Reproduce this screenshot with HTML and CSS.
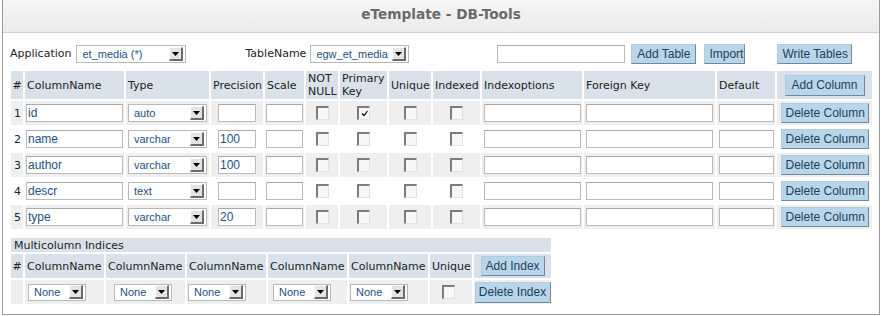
FILE: index.html
```html
<!DOCTYPE html>
<html lang="en">
<head>
<meta charset="UTF-8" />
<meta name="viewport" content="width=device-width, initial-scale=1" />
<title>eTemplate - DB-Tools</title>
<link rel="stylesheet" href="styles.css">
</head>
<body>

<div class="frame">
  <div class="titlebar">eTemplate - DB-Tools</div>

  <div class="content">
    <!-- top toolbar -->
    <div class="toolbar">
      <span class="lbl">Application</span>
      <span class="sel sel-app"><span class="val">et_media (*)</span><span class="arr"><svg width="9" height="9" viewBox="0 0 9 9"><path d="M1 3h7L4.5 7z"/></svg></span></span>
      <span class="lbl lbl-table">TableName</span>
      <span class="sel sel-table"><span class="val">egw_et_media</span><span class="arr"><svg width="9" height="9" viewBox="0 0 9 9"><path d="M1 3h7L4.5 7z"/></svg></span></span>
      <input class="in in-new" type="text" value="" />
      <button class="btn btn-addtable">Add Table</button>
      <button class="btn btn-import">Import</button>
      <button class="btn btn-write">Write Tables</button>
    </div>

    <!-- columns -->
    <table class="grid cols">
      <colgroup>
        <col style="width:12px"><col style="width:99px"><col style="width:83px"><col style="width:52px">
        <col style="width:39px"><col style="width:32px"><col style="width:47px"><col style="width:42px">
        <col style="width:47px"><col style="width:100px"><col style="width:131px"><col style="width:58px">
        <col style="width:95px">
      </colgroup>
      <tr class="hd">
        <th class="num">#</th>
        <th>ColumnName</th>
        <th>Type</th>
        <th>Precision</th>
        <th>Scale</th>
        <th>NOT NULL</th>
        <th>Primary Key</th>
        <th>Unique</th>
        <th>Indexed</th>
        <th>Indexoptions</th>
        <th>Foreign Key</th>
        <th>Default</th>
        <th class="c"><button class="btn btn-addcol">Add Column</button></th>
      </tr>
      <tr class="odd">
        <td class="num">1</td>
        <td><input class="in w-cn" value="id" /></td>
        <td><span class="sel w-type"><span class="val">auto</span><span class="arr"><svg width="9" height="9" viewBox="0 0 9 9"><path d="M1 3h7L4.5 7z"/></svg></span></span></td>
        <td><input class="in w-prec" value="" /></td>
        <td><input class="in w-scale" value="" /></td>
        <td><span class="cb"></span></td>
        <td><span class="cb"><svg width="9" height="9" viewBox="0 0 9 9"><path d="M2 4.5l2 2L7.5 2" fill="none" stroke="#000" stroke-width="1.2"/></svg></span></td>
        <td><span class="cb"></span></td>
        <td><span class="cb"></span></td>
        <td><input class="in w-idx" value="" /></td>
        <td><input class="in w-fk" value="" /></td>
        <td><input class="in w-def" value="" /></td>
        <td><button class="btn btn-del">Delete Column</button></td>
      </tr>
      <tr>
        <td class="num">2</td>
        <td><input class="in w-cn" value="name" /></td>
        <td><span class="sel w-type"><span class="val">varchar</span><span class="arr"><svg width="9" height="9" viewBox="0 0 9 9"><path d="M1 3h7L4.5 7z"/></svg></span></span></td>
        <td><input class="in w-prec" value="100" /></td>
        <td><input class="in w-scale" value="" /></td>
        <td><span class="cb"></span></td>
        <td><span class="cb"></span></td>
        <td><span class="cb"></span></td>
        <td><span class="cb"></span></td>
        <td><input class="in w-idx" value="" /></td>
        <td><input class="in w-fk" value="" /></td>
        <td><input class="in w-def" value="" /></td>
        <td><button class="btn btn-del">Delete Column</button></td>
      </tr>
      <tr class="odd">
        <td class="num">3</td>
        <td><input class="in w-cn" value="author" /></td>
        <td><span class="sel w-type"><span class="val">varchar</span><span class="arr"><svg width="9" height="9" viewBox="0 0 9 9"><path d="M1 3h7L4.5 7z"/></svg></span></span></td>
        <td><input class="in w-prec" value="100" /></td>
        <td><input class="in w-scale" value="" /></td>
        <td><span class="cb"></span></td>
        <td><span class="cb"></span></td>
        <td><span class="cb"></span></td>
        <td><span class="cb"></span></td>
        <td><input class="in w-idx" value="" /></td>
        <td><input class="in w-fk" value="" /></td>
        <td><input class="in w-def" value="" /></td>
        <td><button class="btn btn-del">Delete Column</button></td>
      </tr>
      <tr>
        <td class="num">4</td>
        <td><input class="in w-cn" value="descr" /></td>
        <td><span class="sel w-type"><span class="val">text</span><span class="arr"><svg width="9" height="9" viewBox="0 0 9 9"><path d="M1 3h7L4.5 7z"/></svg></span></span></td>
        <td><input class="in w-prec" value="" /></td>
        <td><input class="in w-scale" value="" /></td>
        <td><span class="cb"></span></td>
        <td><span class="cb"></span></td>
        <td><span class="cb"></span></td>
        <td><span class="cb"></span></td>
        <td><input class="in w-idx" value="" /></td>
        <td><input class="in w-fk" value="" /></td>
        <td><input class="in w-def" value="" /></td>
        <td><button class="btn btn-del">Delete Column</button></td>
      </tr>
      <tr class="odd">
        <td class="num">5</td>
        <td><input class="in w-cn" value="type" /></td>
        <td><span class="sel w-type"><span class="val">varchar</span><span class="arr"><svg width="9" height="9" viewBox="0 0 9 9"><path d="M1 3h7L4.5 7z"/></svg></span></span></td>
        <td><input class="in w-prec" value="20" /></td>
        <td><input class="in w-scale" value="" /></td>
        <td><span class="cb"></span></td>
        <td><span class="cb"></span></td>
        <td><span class="cb"></span></td>
        <td><span class="cb"></span></td>
        <td><input class="in w-idx" value="" /></td>
        <td><input class="in w-fk" value="" /></td>
        <td><input class="in w-def" value="" /></td>
        <td><button class="btn btn-del">Delete Column</button></td>
      </tr>
    </table>

    <!-- multicolumn indices -->
    <table class="grid multi">
      <colgroup>
        <col style="width:12px"><col style="width:79px"><col style="width:79px"><col style="width:79px">
        <col style="width:79px"><col style="width:79px"><col style="width:42px"><col style="width:77px">
      </colgroup>
      <tr class="cap">
        <th colspan="8">Multicolumn Indices</th>
      </tr>
      <tr class="hd2">
        <th class="num">#</th>
        <th>ColumnName</th>
        <th>ColumnName</th>
        <th>ColumnName</th>
        <th>ColumnName</th>
        <th>ColumnName</th>
        <th>Unique</th>
        <th class="c"><button class="btn btn-addidx">Add Index</button></th>
      </tr>
      <tr class="odd">
        <td></td>
        <td class="l"><span class="sel w-none o1"><span class="val">None</span><span class="arr"><svg width="9" height="9" viewBox="0 0 9 9"><path d="M1 3h7L4.5 7z"/></svg></span></span></td>
        <td class="l"><span class="sel w-none o2"><span class="val">None</span><span class="arr"><svg width="9" height="9" viewBox="0 0 9 9"><path d="M1 3h7L4.5 7z"/></svg></span></span></td>
        <td class="l"><span class="sel w-none o3"><span class="val">None</span><span class="arr"><svg width="9" height="9" viewBox="0 0 9 9"><path d="M1 3h7L4.5 7z"/></svg></span></span></td>
        <td class="l"><span class="sel w-none o4"><span class="val">None</span><span class="arr"><svg width="9" height="9" viewBox="0 0 9 9"><path d="M1 3h7L4.5 7z"/></svg></span></span></td>
        <td class="l"><span class="sel w-none o5"><span class="val">None</span><span class="arr"><svg width="9" height="9" viewBox="0 0 9 9"><path d="M1 3h7L4.5 7z"/></svg></span></span></td>
        <td class="l"><span class="cb cb-uniq"></span></td>
        <td><button class="btn btn-delidx">Delete Index</button></td>
      </tr>
    </table>
  </div>
</div>

</body>
</html>
```

FILE: styles.css
```css
/* page */
body {
  margin: 0;
  background: #fff;
  font-family: "DejaVu Sans", Verdana, sans-serif;
  font-size: 11px;
  color: #222;
}

/* window frame */
.frame {
  margin-left: 2px;
  width: 876px;
  border: 1px solid #9c9c9c;
  border-top: none;
  padding-bottom: 8px;
}

.titlebar {
  height: 32px;
  line-height: 28px;
  text-align: center;
  font-weight: bold;
  font-size: 13.7px;
  color: #6a6a6a;
  background: linear-gradient(#f6f6f6, #ebebeb);
  border-bottom: 1px solid #cfcfcf;
}

.content {
  padding-top: 10px;
}

/* toolbar */
.toolbar {
  display: flex;
  align-items: center;
  height: 21px;
  padding-left: 7px;
}
.lbl { color: #222; }
.sel-app { width: 110px; margin-left: 5px; }
.lbl-table { margin-left: 59px; }
.sel-table { width: 99px; margin-left: 4px; }
.in-new { width: 128px; height: 19px; margin-left: 88px; }
.btn-addtable { width: 65px; height: 21px; margin-left: 6px; }
.btn-import { width: 41px; height: 21px; margin-left: 8px; padding: 0; }
.btn-write { width: 75px; height: 21px; margin-left: 32px; padding: 0; }

/* form controls */
.in {
  box-sizing: border-box;
  height: 18px;
  border: 1px solid #bababa;
  border-top-color: #a8a8a8;
  padding: 0 1px;
  font: 12px "Liberation Sans", Arial, sans-serif;
  color: #1d5183;
  background: #fff;
  vertical-align: middle;
  outline: none;
}

.sel {
  display: inline-flex;
  align-items: center;
  box-sizing: border-box;
  height: 18px;
  border: 1px solid #b8b8b8;
  background: #fff;
  padding-left: 5px;
  font: 11px "Liberation Sans", Arial, sans-serif;
  color: #1d5183;
  vertical-align: middle;
  text-align: left;
}
.sel .val {
  flex: 1;
  white-space: nowrap;
  overflow: hidden;
}
.sel .arr {
  display: flex;
  align-items: center;
  justify-content: center;
  width: 11px;
  height: 11px;
  margin-right: 2px;
  background: #e4e4e4;
  border-top: 1px solid #fafafa;
  border-left: 1px solid #fafafa;
  border-right: 2px solid #6b6b6b;
  border-bottom: 2px solid #6b6b6b;
}
.sel .arr svg { display: block; }

.cb {
  display: inline-block;
  box-sizing: border-box;
  width: 13px;
  height: 14px;
  border-top: 2px solid #7c7c7c;
  border-left: 2px solid #7c7c7c;
  border-right: 1px solid #e2e2e2;
  border-bottom: 1px solid #e2e2e2;
  background: #f7f7f7;
  vertical-align: middle;
}
.cb svg { display: block; margin: 1px 0 0 1px; }

.btn {
  box-sizing: border-box;
  height: 20px;
  padding: 0 4px;
  font: 12px "Liberation Sans", Arial, sans-serif;
  color: #1c3f5e;
  background: #b8d5e9;
  border: 1px solid #b4cad8;
  border-right-color: #71889a;
  border-bottom-color: #71889a;
  vertical-align: middle;
  white-space: nowrap;
}

/* grids */
.grid {
  border-collapse: separate;
  border-spacing: 2px;
  table-layout: fixed;
  margin-left: 6px;
}
.grid th,
.grid td {
  padding: 0;
  font-weight: normal;
  text-align: center;
  vertical-align: middle;
}
.grid th {
  background: #d9e2ea;
  text-align: left;
  padding-left: 2px;
  line-height: 13px;
  color: #222;
}
.grid th.num { padding-left: 0; text-align: center; }
.grid th.c { text-align: center; padding-left: 0; }
.grid td.num { text-align: left; padding-left: 3px; }
.grid td.l { text-align: left; }
.grid tr.odd td { background: #efefef; }

.cols { width: 865px; margin-top: 5px; }
.cols tr.hd th { height: 28px; }
.cols td { height: 24px; }

.w-cn { width: 97px; }
.w-type { width: 79px; }
.w-prec { width: 38px; }
.w-scale { width: 37px; }
.w-idx { width: 97px; }
.w-fk { width: 127px; }
.w-def { width: 55px; }
.btn-del { width: 88px; }
.btn-addcol { width: 80px; height: 21px; }

.multi { width: 544px; margin-top: 5px; }
.multi tr.cap th { height: 14px; padding-left: 3px; }
.multi tr.hd2 th { height: 24px; }
.multi td { height: 24px; }
.w-none { width: 58px; height: 17px; }
.o1 { margin-left: 3px; }
.o2 { margin-left: 8px; }
.o3 { margin-left: 1px; }
.o4 { margin-left: 5px; }
.o5 { margin-left: 1px; }
.cb-uniq { margin-left: 12px; }
.btn-addidx { width: 64px; }
.btn-delidx { width: 76px; height: 21px; padding: 0; }
```
